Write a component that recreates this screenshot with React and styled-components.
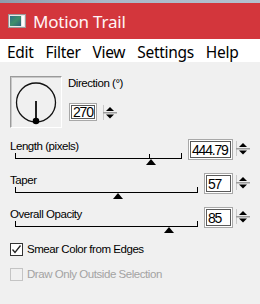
import styled, { createGlobalStyle } from "styled-components";

const GlobalStyle = createGlobalStyle`
  html, body {
    margin: 0;
    padding: 0;
    background: #f0f0f0;
  }
  * {
    box-sizing: border-box;
  }
`;

const Window = styled.div`
  width: 260px;
  height: 304px;
  overflow: hidden;
  background: #f0f0f0;
  font-family: "Liberation Sans", Arial, sans-serif;
`;

const TopStrip = styled.div`
  height: 3px;
  background: linear-gradient(90deg, #8e9cab 0%, #a9b8c8 40%, #b3c1cf 100%);
`;

const TitleBar = styled.div`
  height: 36px;
  background: #d3363c;
  display: flex;
  align-items: center;
  padding-left: 8px;
  gap: 7px;
`;

const TitleText = styled.span`
  font-family: "Noto Sans", "Open Sans", sans-serif;
  font-size: 17px;
  letter-spacing: -0.2px;
  color: #fff4f6;
  padding-top: 1px;
`;

const MenuBar = styled.div`
  height: 23px;
  background: #ffffff;
  display: flex;
  align-items: center;
  padding: 2px 0 0 1px;
`;

const MenuItem = styled.span`
  font-family: "Noto Sans", "Open Sans", sans-serif;
  font-size: 15.5px;
  letter-spacing: -0.3px;
  color: #000;
  padding: 0 6px;
`;

const Body = styled.div`
  padding-top: 14px;
`;

const DialSection = styled.div`
  display: flex;
  padding-left: 10px;
  gap: 6px;
  margin-bottom: 11px;
`;

const DialBox = styled.div`
  width: 52px;
  height: 52px;
  border-top: 1px solid #9a9a9a;
  border-left: 1px solid #9a9a9a;
  border-right: 1px solid #ffffff;
  border-bottom: 1px solid #ffffff;
  box-shadow: inset 1px 1px 0 #c8c8c8;
  display: flex;
  align-items: center;
  justify-content: center;
`;

const DirColumn = styled.div`
  display: flex;
  flex-direction: column;
  padding-top: 1px;
`;

const Label = styled.div`
  font-size: 11.5px;
  line-height: 13px;
  letter-spacing: -0.45px;
  color: ${(p) => (p.$disabled ? "#a3a3a3" : "#000")};
  white-space: nowrap;
`;

const SpinRow = styled.div`
  display: flex;
  align-items: flex-start;
  gap: 6px;
  margin-top: 13px;
  margin-left: 1px;
`;

const NumBox = styled.div`
  width: ${(p) => p.$w}px;
  height: ${(p) => p.$h || 21}px;
  background: #fff;
  border: 1px solid #a8a8a8;
  box-shadow: inset 0 0 0 1px #ffffff, inset 0 0 0 2px #5a5a5a;
  font-size: 14px;
  letter-spacing: -1.2px;
  color: #000;
  padding: ${(p) => (p.$h ? "1px 0 0 3px" : "3px 0 0 3px")};
  line-height: 15px;
  flex-shrink: 0;
  white-space: nowrap;
`;

const SpinWrap = styled.div`
  flex-shrink: 0;
  margin-top: 2px;
  margin-left: ${(p) => p.$ml || 0}px;
  display: flex;
`;

const SliderRow = styled.div`
  display: flex;
  align-items: flex-start;
  height: 34px;
  padding: 0 10px;
`;

const SliderCol = styled.div`
  flex: 1;
  margin-right: 6px;
  padding-top: 1px;
`;

const Track = styled.div`
  position: relative;
  margin-left: 5px;
  height: 6px;
  border-left: 1px solid #000;
  border-right: 1px solid #000;
  border-bottom: 1px solid #000;
`;

const Tick = styled.div`
  position: absolute;
  bottom: 0;
  width: 1px;
  height: 4px;
  background: #000;
`;

const Thumb = styled.div`
  position: absolute;
  top: 6px;
  width: 0;
  height: 0;
  transform: translateX(-50%);
  border-left: 5.5px solid transparent;
  border-right: 5.5px solid transparent;
  border-bottom: 6px solid #000;
`;

const CheckList = styled.div`
  display: flex;
  flex-direction: column;
  gap: 12px;
  padding-left: 10px;
  margin-top: 2px;
`;

const CheckRow = styled.div`
  display: flex;
  align-items: center;
  gap: 4px;
  height: 13px;
`;

const Box = styled.div`
  width: 13px;
  height: 13px;
  border: 1px solid ${(p) => (p.$disabled ? "#c4c4c4" : "#333")};
  background: ${(p) => (p.$disabled ? "#f0f0f0" : "#fff")};
  display: flex;
  align-items: center;
  justify-content: center;
`;

const AppIcon = () => (
  <svg width="18" height="14" viewBox="0 0 18 14">
    <defs>
      <linearGradient id="ig" x1="0" y1="0" x2="1" y2="1">
        <stop offset="0" stopColor="#2f6f8a" />
        <stop offset="0.5" stopColor="#3f8f6a" />
        <stop offset="1" stopColor="#2c5f7c" />
      </linearGradient>
    </defs>
    <rect x="0.5" y="0.5" width="17" height="13" fill="#e8e8e8" stroke="#9a9a9a" />
    <rect x="2" y="2" width="11" height="10" fill="url(#ig)" />
    <rect x="14" y="2" width="2" height="10" fill="#ffffff" />
  </svg>
);

const Dial = () => (
  <svg width="50" height="50" viewBox="0 0 50 50">
    <circle cx="25" cy="25.5" r="19.5" fill="none" stroke="#111" strokeWidth="1.3" />
    <line x1="25" y1="24" x2="25" y2="44" stroke="#222" strokeWidth="2" />
    <circle cx="25" cy="44" r="3.3" fill="#000" />
  </svg>
);

const Spinner = () => (
  <svg width="14" height="15" viewBox="0 0 14 15">
    <rect x="0" y="0" width="1" height="15" fill="#c9c9c9" />
    <polygon points="3,6 11,6 7,2" fill="#000" />
    <rect x="0" y="7" width="14" height="1.5" fill="#9c9c9c" />
    <polygon points="3,9.5 11,9.5 7,13.5" fill="#000" />
  </svg>
);

const CheckMark = () => (
  <svg width="11" height="11" viewBox="0 0 11 11">
    <polyline points="1.5,5.5 4,8.5 9.5,1.5" fill="none" stroke="#222" strokeWidth="1.3" />
  </svg>
);

const sliders = [
  { label: "Length (pixels)", value: "444.79", w: 45, pos: 81.6, tick: 80.4 },
  { label: "Taper", value: "57", w: 29, pos: 56.6 },
  { label: "Overall Opacity", value: "85", w: 29, pos: 84.8 },
];

const menu = ["Edit", "Filter", "View", "Settings", "Help"];

export default function App() {
  return (
    <Window>
      <GlobalStyle />
      <TopStrip />
      <TitleBar>
        <AppIcon />
        <TitleText>Motion Trail</TitleText>
      </TitleBar>
      <MenuBar>
        {menu.map((m) => (
          <MenuItem key={m}>{m}</MenuItem>
        ))}
      </MenuBar>
      <Body>
        <DialSection>
          <DialBox>
            <Dial />
          </DialBox>
          <DirColumn>
            <Label>Direction (°)</Label>
            <SpinRow>
              <NumBox $w={28} $h={18}>270</NumBox>
              <SpinWrap>
                <Spinner />
              </SpinWrap>
            </SpinRow>
          </DirColumn>
        </DialSection>

        {sliders.map((s) => (
          <SliderRow key={s.label}>
            <SliderCol>
              <Label>{s.label}</Label>
              <Track>
                {s.tick && <Tick style={{ left: `${s.tick}%` }} />}
                <Thumb style={{ left: `${s.pos}%` }} />
              </Track>
            </SliderCol>
            <NumBox $w={s.w}>{s.value}</NumBox>
            <SpinWrap $ml={3}>
              <Spinner />
            </SpinWrap>
          </SliderRow>
        ))}

        <CheckList>
          <CheckRow>
            <Box>
              <CheckMark />
            </Box>
            <Label>Smear Color from Edges</Label>
          </CheckRow>
          <CheckRow>
            <Box $disabled />
            <Label $disabled>Draw Only Outside Selection</Label>
          </CheckRow>
        </CheckList>
      </Body>
    </Window>
  );
}
